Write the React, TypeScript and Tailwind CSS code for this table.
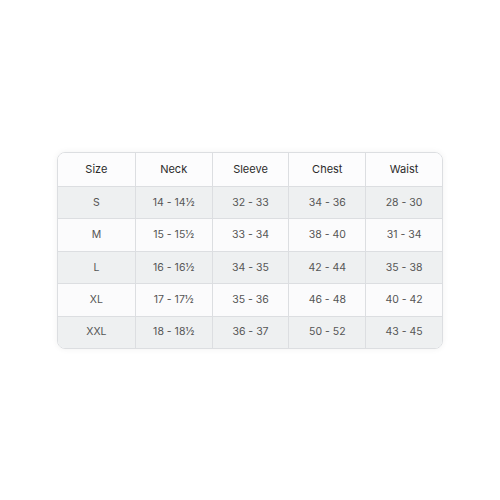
const headers = ["Size", "Neck", "Sleeve", "Chest", "Waist"];

const rows = [
  ["S", "14 - 14½", "32 - 33", "34 - 36", "28 - 30"],
  ["M", "15 - 15½", "33 - 34", "38 - 40", "31 - 34"],
  ["L", "16 - 16½", "34 - 35", "42 - 44", "35 - 38"],
  ["XL", "17 - 17½", "35 - 36", "46 - 48", "40 - 42"],
  ["XXL", "18 - 18½", "36 - 37", "50 - 52", "43 - 45"],
];

export default function App() {
  return (
    <div
      className="flex h-[500px] w-[500px] items-start justify-center bg-white pt-[152px]"
      style={{ fontFamily: "Inter, 'Noto Sans', sans-serif" }}
    >
      <div className="w-[386px] overflow-hidden rounded-[8px] border border-[#dcdee1] shadow-[0_0_6px_rgba(0,0,0,0.06)]">
        <div className="grid h-[33px] grid-cols-5 bg-[#fcfcfd]">
          {headers.map((h, i) => (
            <div
              key={h}
              className={`flex items-center justify-center text-[11px] text-[#2b2b2b] ${i > 0 ? "border-l border-[#dcdee1]" : ""}`}
            >
              {h}
            </div>
          ))}
        </div>
        {rows.map((row, r) => (
          <div
            key={row[0]}
            className={`grid h-[32.4px] grid-cols-5 border-t border-[#dcdee1] ${r % 2 === 0 ? "bg-[#eef0f1]" : "bg-[#fbfbfc]"}`}
          >
            {row.map((cell, i) => (
              <div
                key={i}
                className={`flex items-center justify-center text-[10.5px] text-[#555] ${i > 0 ? "border-l border-[#dcdee1]" : ""}`}
              >
                {cell}
              </div>
            ))}
          </div>
        ))}
      </div>
    </div>
  );
}
